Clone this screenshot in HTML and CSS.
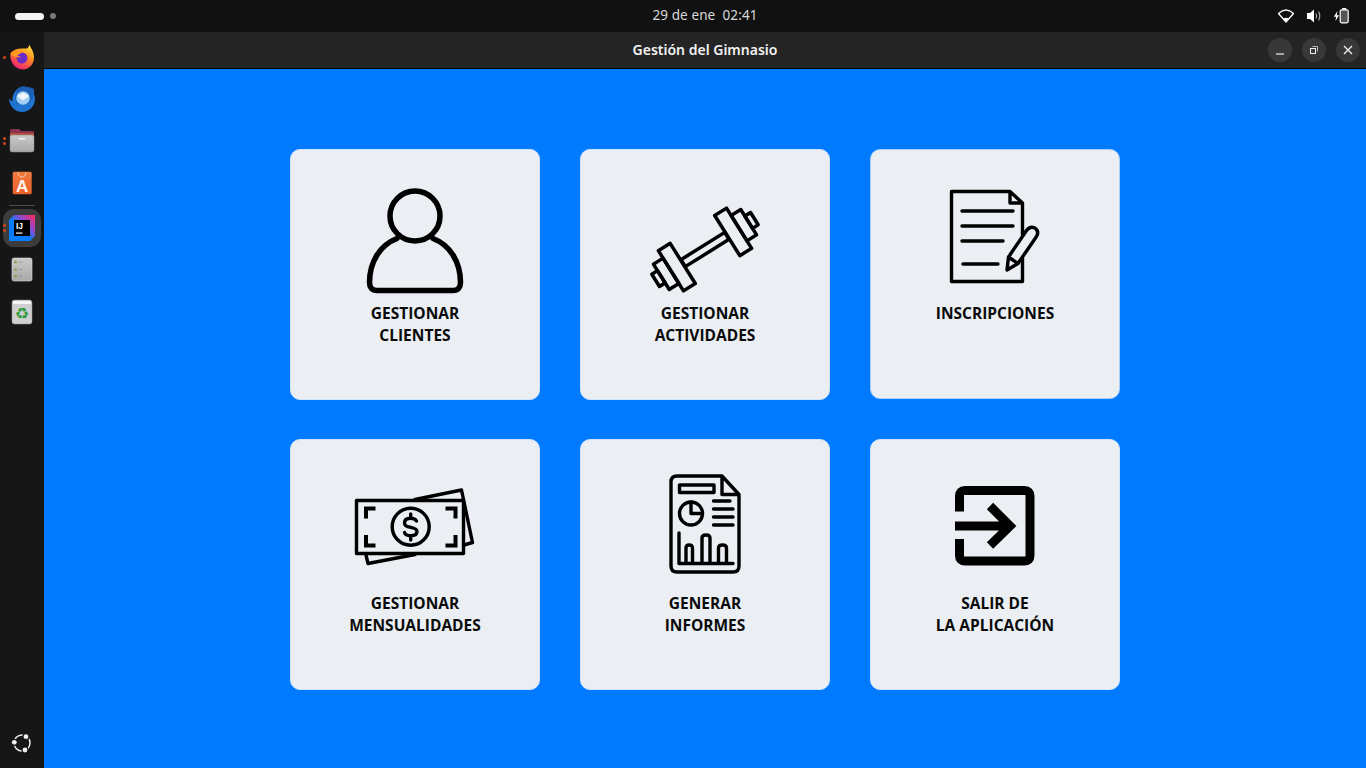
FILE: index.html
```html
<!DOCTYPE html>
<html lang="es">
<head>
<meta charset="utf-8">
<title>Gestión del Gimnasio</title>
<link rel="stylesheet" href="styles.css">
</head>
<body>
<header class="topbar">
  <div class="workspaces"><span class="ws-pill"></span><span class="ws-dot"></span></div>
  <div class="clock">29 de ene&nbsp;&nbsp;02:41</div>
  <div class="tray">
    <svg class="tray-icon" viewBox="0 0 18 18"><path d="M1.5 6.5Q9-.5 16.500 6.500L9 15Z" fill="none" stroke="#fff" stroke-width="1.300" stroke-linejoin="round"/><path d="M6.200 11.500Q9 9.800 11.800 11.500L9 15Z" fill="#fff"/></svg>
    <svg class="tray-icon" viewBox="0 0 18 18"><path d="M2 6H5L9 2.500V15.500L5 12H2Z" fill="#fff"/><path d="M11 6.500Q12.500 9 11 11.500M13.500 4.500Q16 9 13.500 13.500" fill="none" stroke="#aaa" stroke-width="1.200"/></svg>
    <svg class="tray-icon" viewBox="0 0 18 18"><path d="M4.500 4 .8 9.800H3L2.500 14 6 8.200H3.800Z" fill="#fff"/><rect x="7.200" y="2.800" width="8" height="13" rx="1.500" fill="#555" stroke="#fff" stroke-width="1.200"/><rect x="9.200" y="1" width="4" height="1.600" fill="#fff"/></svg>
  </div>
</header>
<div class="desktop">
  <nav class="dock">
    <div class="dock-item"><span class="run-dots"><i></i></span>
      <svg class="dock-icon" viewBox="0 0 28 28">
        <defs>
          <linearGradient id="ff" x1="0.800" y1="0" x2="0.300" y2="1"><stop offset="0" stop-color="#ffe23a"/><stop offset="0.450" stop-color="#ff8a1f"/><stop offset="1" stop-color="#f0187a"/></linearGradient>
          <linearGradient id="ij" x1="0" y1="1" x2="1" y2="0"><stop offset="0.450" stop-color="#087cfa"/><stop offset="0.700" stop-color="#9a45c8"/><stop offset="1" stop-color="#fe2857"/></linearGradient>
          <linearGradient id="gr" x1="0" y1="0" x2="0" y2="1"><stop offset="0" stop-color="#c9c9c9"/><stop offset="1" stop-color="#a9a9a9"/></linearGradient>
          <linearGradient id="ap" x1="0" y1="0" x2="0" y2="1"><stop offset="0" stop-color="#f07a3c"/><stop offset="1" stop-color="#e9602a"/></linearGradient>
        </defs>
        <path d="M2.500 10C1 18 7 26.500 14.500 26.500 22 26.500 26.500 20 26 13.500 25.500 8 23 5 21 1.500 21 5 19 6 16 5.500 11 5 6 6 2.500 10Z" fill="url(#ff)"/>
        <circle cx="14" cy="15" r="5.500" fill="#6c2bc4"/>
        <path d="M3 9.500Q8 6.500 14 9.500L9 12.500 13 14Q8 15 3 12Z" fill="#ff9a1e"/>
      </svg>
    </div>
    <div class="dock-item">
      <svg class="dock-icon" viewBox="0 0 28 28">
        <path d="M14 1.500C21 .5 27 6 27 14 27 21 21 27 14 27 7 27 1 21 1 13.500 2 15 3 16 4.500 16 4 9 8 3 14 1.500Z" fill="#1f74d2"/>
        <path d="M10 3.500C14 1 21 1.500 26 4 27 8 24 17 19 19H9C7 13 7 7 10 3.500Z" fill="#1a5fb4"/>
        <circle cx="15" cy="13" r="6.800" fill="#9fd0f3"/>
        <path d="M9 11 15 7.500 21 11 15 15.500Z" fill="#f2f6fa"/>
      </svg>
    </div>
    <div class="dock-item"><span class="run-dots"><i></i><i></i></span>
      <svg class="dock-icon" viewBox="0 0 28 28">
        <path d="M2 4Q2 2 4 2H11L13 4H25Q26 4 26 6V12H2Z" fill="#8d3350"/>
        <rect x="2" y="6" width="24" height="3" fill="#b5503e"/>
        <rect x="2" y="8" width="24" height="17" rx="2" fill="url(#gr)" stroke="#888" stroke-width=".5"/>
        <rect x="11" y="11" width="6" height="1.600" fill="#f2f2f2"/>
      </svg>
    </div>
    <div class="dock-item">
      <svg class="dock-icon" viewBox="0 0 28 28">
        <rect x="4.700" y="2.700" width="19" height="22.600" rx="1.500" fill="url(#ap)"/>
        <path d="M10 3.500Q10.500 8 14 8 17.500 8 18 3.500" fill="none" stroke="#f9d3c2" stroke-width="1"/>
        <text class="glyph-a" x="14.200" y="23" text-anchor="middle">A</text>
      </svg>
    </div>
    <div class="dock-sep"></div>
    <div class="dock-item dock-item-active"><span class="run-dots"><i></i><i></i></span>
      <svg class="dock-icon" viewBox="0 0 28 28">
        <path d="M6 1H27V22L22 27H1V6Z" fill="url(#ij)"/>
        <rect x="6" y="6" width="16" height="16" fill="#000"/>
        <text class="glyph-ij" x="8" y="14.500">IJ</text>
        <rect x="8" y="18.500" width="6.500" height="1.200" fill="#fff"/>
      </svg>
    </div>
    <div class="dock-item">
      <svg class="dock-icon" viewBox="0 0 28 28">
        <rect x="4" y="2" width="20" height="23" rx="2" fill="url(#gr)" stroke="#ddd" stroke-width=".6"/>
        <g fill="#8fa356"><circle cx="7.500" cy="6" r="1.500"/><circle cx="7.500" cy="13.500" r="1.500"/><circle cx="7.500" cy="20" r="1.500"/></g>
        <path d="M11 6H15M11 13.500H15M11 20H15" stroke="#777" stroke-width="1" stroke-dasharray="1 1"/>
      </svg>
    </div>
    <div class="dock-item">
      <svg class="dock-icon" viewBox="0 0 28 28">
        <rect x="4" y="2" width="20" height="24" rx="2.500" fill="#cfcfcf" stroke="#999" stroke-width=".5"/>
        <rect x="5" y="3" width="18" height="3" fill="#f5f5f5"/>
        <text class="glyph-recycle" x="14" y="21" text-anchor="middle">♻</text>
      </svg>
    </div>
    <div class="dock-bottom">
      <svg class="dock-icon" viewBox="0 0 28 28">
        <circle cx="14" cy="14" r="8" fill="none" stroke="#eee" stroke-width="1.500"/>
        <g fill="#161616"><circle cx="18" cy="7.700" r="3.600"/><circle cx="6.300" cy="13.300" r="3.600"/><circle cx="17" cy="21" r="3.600"/></g>
        <g fill="#eee"><circle cx="18" cy="7.700" r="2.400"/><circle cx="6.300" cy="13.300" r="2.400"/><circle cx="17" cy="21" r="2.400"/></g>
      </svg>
    </div>
  </nav>
  <div class="window">
    <div class="titlebar">
      <div class="title">Gestión del Gimnasio</div>
      <div class="controls">
        <span class="ctl"><svg viewBox="0 0 24 24"><path d="M8 16H16" stroke="#eee" stroke-width="1.200"/></svg></span>
        <span class="ctl"><svg viewBox="0 0 24 24"><rect x="8.500" y="10.500" width="5" height="5" fill="none" stroke="#eee"/><path d="M10.500 8.500H15.500V13.500" fill="none" stroke="#bbb"/></svg></span>
        <span class="ctl"><svg viewBox="0 0 24 24"><path d="M8 8 16 16M16 8 8 16" stroke="#eee" stroke-width="1.400"/></svg></span>
      </div>
    </div>
    <main class="content">
      <div class="grid">
        <button class="card">
          <svg class="card-icon" viewBox="360 185 110 110">
            <circle cx="415" cy="216" r="25" class="s5"/>
            <path class="s5" d="M397 238.500C380 245 369.500 262 369.500 282.500 369.500 287.500 372 290.500 377 290.500H453C458 290.500 460.500 287.500 460.500 282.500 460.500 262 450 245 433 238.500"/>
          </svg>
          <span class="label">GESTIONAR<br>CLIENTES</span>
        </button>
        <button class="card">
          <svg class="card-icon" viewBox="650 185 110 110">
            <g transform="rotate(-32 705 249.500) translate(705 249.500) scale(1.030)" class="s3">
              <rect x="-25" y="-4" width="50" height="8"/>
              <rect x="25.500" y="-23" width="13.500" height="46"/><rect x="39" y="-14.500" width="11" height="29"/><rect x="50" y="-7" width="6.500" height="14"/>
              <rect x="-39" y="-23" width="13.500" height="46"/><rect x="-50" y="-14.500" width="11" height="29"/><rect x="-56.500" y="-7" width="6.500" height="14"/>
            </g>
          </svg>
          <span class="label">GESTIONAR<br>ACTIVIDADES</span>
        </button>
        <button class="card card-short">
          <svg class="card-icon" viewBox="940 185 110 110">
            <path class="s3" d="M1022.500 235V203L1010 191.500H951.500V281.500H1022.500V258M1010 191.500V203H1022.500"/>
            <path class="s3" d="M962 211H1013M962 226H1013M962 241H1003M963 264H998"/>
            <path class="s3" d="M1007 270 1008.500 257 1026.500 230.500Q1030 225.500 1035 228 1039.500 231.500 1036.500 236.500L1018 263.500ZM1008.500 257 1018 263.500"/>
          </svg>
          <span class="label">INSCRIPCIONES</span>
        </button>
        <button class="card">
          <svg class="card-icon" viewBox="360 475 110 110">
            <rect class="s3" x="356.500" y="500.500" width="107" height="53"/>
            <path class="s3" d="M415 499.500 461.500 490 472.500 542.500 464 545M366 555 368 563.500 415 554.500"/>
            <path class="s4" d="M375.500 508.500H366V518.500M445.500 508.500H455.500V518.500M366 535V545.500H375.500M455.500 535V545.500H445.500"/>
            <circle class="s3" cx="410.700" cy="526.700" r="18.500"/>
            <path class="s3" d="M416.500 521Q415 518.300 410.700 518.300 404.500 518.300 404.500 523 404.500 526.500 410.700 527.300 417 528.500 417 531.500 417 535.700 410.700 535.700 405.500 535.700 404.500 532.500M410.700 514V518.300M410.700 535.700V540"/>
          </svg>
          <span class="label">GESTIONAR<br>MENSUALIDADES</span>
        </button>
        <button class="card">
          <svg class="card-icon" viewBox="650 475 110 110">
            <path class="s3" d="M722 476H677Q671 476 671 482V566Q671 572 677 572H733Q739 572 739 566V494.500L722 476V494.500H739"/>
            <rect class="s3" x="679.500" y="485" width="34.500" height="7.500"/>
            <circle class="s3" cx="691" cy="513.500" r="11.500"/>
            <path class="s3" d="M691 502V513.500H702.500"/>
            <path class="s3" d="M713.500 501H730M713.500 509H733M713.500 517H733M713.500 525H733"/>
            <path class="s3" d="M679 533V563.500H733M686 563V548Q686 545 689 545 692.500 545 692.500 548V563M702 563V538Q702 535 706 535 710 535 710 538V563M718.500 563V548Q718.500 545 722.500 545 726.500 545 726.500 548V563"/>
          </svg>
          <span class="label">GENERAR<br>INFORMES</span>
        </button>
        <button class="card">
          <svg class="card-icon" viewBox="940 475 110 110">
            <path class="s9" d="M959.500 511.500V496Q959.500 490.500 965 490.500H1024.500Q1030 490.500 1030 496V555.500Q1030 561 1024.500 561H965Q959.500 561 959.500 555.500V539"/>
            <path class="s9 miter" d="M955 526H1008M990 506 1010 526 990 545.500"/>
          </svg>
          <span class="label">SALIR DE<br>LA APLICACIÓN</span>
        </button>
      </div>
    </main>
  </div>
</div>
</body>
</html>
```

FILE: styles.css
```css
* { box-sizing: border-box; }
html, body { margin: 0; height: 100%; }
body {
  width: 1366px;
  height: 768px;
  overflow: hidden;
  display: flex;
  flex-direction: column;
  background: #151515;
  font-family: "Noto Sans", "Open Sans", sans-serif;
}

/* top bar: the clock is centred over the window area, right of the dock */
.topbar {
  height: 32px;
  flex: none;
  display: grid;
  grid-template-columns: 1fr auto 1fr;
  align-items: center;
  background: #111;
  padding: 0 0 0 44px;
}
.workspaces { display: flex; align-items: center; gap: 6px; margin-left: -29px; }
.ws-pill { width: 29px; height: 7px; border-radius: 4px; background: #f4f4f4; }
.ws-dot { width: 6px; height: 6px; border-radius: 50%; background: #7a7a7a; }
.clock { color: #d8d8d8; font-size: 13.500px; letter-spacing: .1px; padding-bottom: 2px; }
.tray { display: flex; justify-content: flex-end; gap: 10px; padding-right: 15px; }
.tray-icon { width: 18px; height: 18px; display: block; }

/* layout */
.desktop { flex: 1; display: flex; min-height: 0; }
.dock {
  width: 44px;
  flex: none;
  display: flex;
  flex-direction: column;
  padding-top: 4px;
  background: #161616;
}
.dock-item {
  position: relative;
  height: 42px;
  display: flex;
  align-items: center;
  justify-content: center;
}
.dock-item-active::before {
  content: "";
  position: absolute;
  left: 3px;
  top: 2px;
  width: 38px;
  height: 38px;
  border-radius: 11px;
  background: #3c3c3c;
}
.dock-icon { width: 28px; height: 28px; display: block; position: relative; }
.run-dots {
  position: absolute;
  left: 3px;
  top: 0;
  bottom: 0;
  display: flex;
  flex-direction: column;
  justify-content: center;
  gap: 2px;
  z-index: 1;
}
.run-dots i { width: 3px; height: 3px; border-radius: 50%; background: #d5471a; display: block; }
.dock-sep { height: 1px; margin: 1px 9px 1px; background: #4a4a4a; }
.dock-bottom { margin-top: auto; padding-bottom: 11px; display: flex; justify-content: center; }
.glyph-a { font: 700 17px "Liberation Sans", sans-serif; fill: #fdf0ea; }
.glyph-ij { font: 700 8.500px "Liberation Sans", sans-serif; fill: #fff; }
.glyph-recycle { font: 700 16px "DejaVu Sans", sans-serif; fill: #2f9a3b; }

/* window */
.window { flex: 1; display: flex; flex-direction: column; min-width: 0; }
.titlebar {
  position: relative;
  height: 37px;
  flex: none;
  display: flex;
  align-items: center;
  justify-content: center;
  padding-bottom: 2px;
  background: #242424;
  border-bottom: 1px solid #000;
}
.title { color: #f2f2f2; font-size: 14px; font-weight: 600; }
.controls {
  position: absolute;
  right: 6px;
  top: 6px;
  display: flex;
  gap: 10px;
}
.ctl { width: 24px; height: 24px; border-radius: 50%; background: #383838; display: block; }
.ctl svg { width: 24px; height: 24px; display: block; }

.content {
  flex: 1;
  display: flex;
  align-items: center;
  justify-content: center;
  padding-top: 2px;
  background: #007bff;
}
.grid {
  display: grid;
  grid-template-columns: repeat(3, 250px);
  grid-auto-rows: 251px;
  column-gap: 40px;
  row-gap: 39px;
}
.card {
  display: flex;
  flex-direction: column;
  align-items: center;
  padding: 35px 0 0;
  margin: 0;
  border: 1px solid #cfe3fb;
  border-radius: 10px;
  background: #ebeff3;
  font-family: inherit;
  color: #000;
}
.card-short { height: 250px; border-color: #a9cdf7; }
.card-icon { width: 110px; height: 110px; display: block; overflow: visible; flex: none; }
.label {
  margin-top: 7px;
  font-family: "Open Sans", "Noto Sans", sans-serif;
  font-size: 15.500px;
  line-height: 22px;
  font-weight: 700;
  text-align: center;
  color: #0a0a0a;
}
.s3, .s3 * , .s4, .s5, .s9 { fill: none; stroke: #000; stroke-linejoin: round; stroke-linecap: round; }
.s3, .s3 * { stroke-width: 3.400; }
.s4 { stroke-width: 4; stroke-linecap: butt; stroke-linejoin: miter; }
.s5 { stroke-width: 5.500; }
.s9 { stroke-width: 9; stroke-linecap: butt; }
.miter { stroke-linejoin: miter; }
```
